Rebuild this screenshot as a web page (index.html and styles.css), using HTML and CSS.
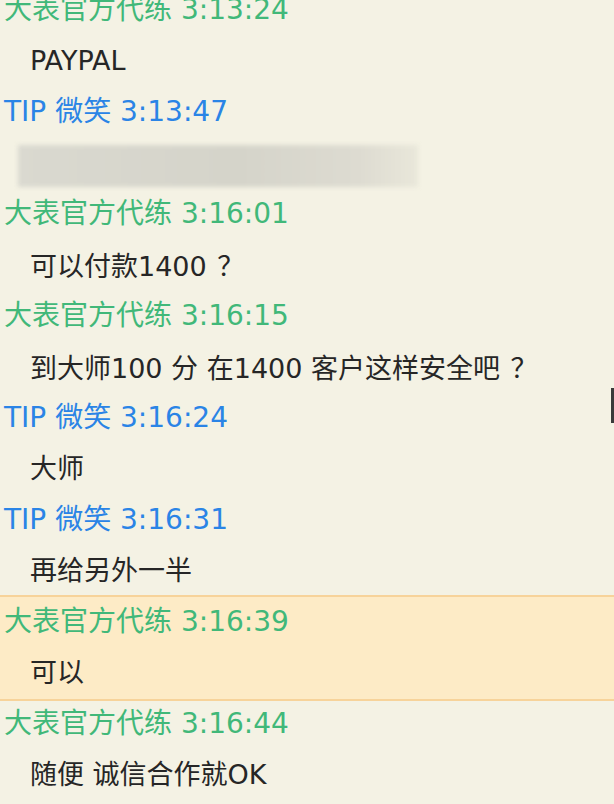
FILE: index.html
```html
<!DOCTYPE html>
<html lang="zh-CN">
<head>
    <meta charset="UTF-8">
    <meta name="viewport" content="width=device-width, initial-scale=1.0">
    <title>聊天记录</title>
    <link rel="stylesheet" href="styles.css">
</head>
<body>
    <div class="chat-log">
        <div class="entry">
            <div class="sender seller">大表官方代练 3:13:24</div>
            <div class="text">PAYPAL</div>
        </div>
        <div class="entry">
            <div class="sender buyer">TIP 微笑 3:13:47</div>
            <div class="text"><div class="blurred"></div></div>
        </div>
        <div class="entry">
            <div class="sender seller">大表官方代练 3:16:01</div>
            <div class="text">可以付款1400 <span class="fw">？</span></div>
        </div>
        <div class="entry">
            <div class="sender seller">大表官方代练 3:16:15</div>
            <div class="text">到大师100 分 在1400 客户这样安全吧 <span class="fw">？</span></div>
        </div>
        <div class="entry">
            <div class="sender buyer">TIP 微笑 3:16:24</div>
            <div class="text">大师</div>
        </div>
        <div class="entry">
            <div class="sender buyer">TIP 微笑 3:16:31</div>
            <div class="text">再给另外一半</div>
        </div>
        <div class="entry selected">
            <div class="sender seller">大表官方代练 3:16:39</div>
            <div class="text">可以</div>
        </div>
        <div class="entry">
            <div class="sender seller">大表官方代练 3:16:44</div>
            <div class="text">随便 诚信合作就OK</div>
        </div>
    </div>
    <div class="caret"></div>
</body>
</html>
```

FILE: styles.css
```css
html, body {
    margin: 0;
    padding: 0;
    background: #f4f2e4;
    overflow: hidden;
}

body {
    font-family: "DejaVu Sans", "Noto Sans CJK SC", sans-serif;
    position: relative;
    height: 804px;
}

.chat-log {
    margin-top: -15px;
}

.entry {
    display: flex;
    flex-direction: column;
}

.sender {
    height: 50px;
    line-height: 50px;
    font-size: 28px;
    padding-left: 4px;
    white-space: nowrap;
}

.seller {
    color: #41b879;
}

.buyer {
    color: #2a84e6;
}

.text {
    height: 52px;
    line-height: 52px;
    font-size: 27px;
    color: #262626;
    padding-left: 30px;
    white-space: nowrap;
}

.fw {
    font-family: "Noto Sans CJK JP", "Noto Sans CJK SC", sans-serif;
    margin-left: 2px;
}

.blurred {
    width: 400px;
    height: 42px;
    margin: 8px 0 0 -12px;
    background: linear-gradient(to right, #dad9d0, #d5d4ca 55%, #dddbd1 85%, #e9e7da);
    filter: blur(2px);
}

.entry.selected {
    background: #fdebc6;
    border-top: 2px solid #f7d39a;
    border-bottom: 2px solid #f7d39a;
    margin: -2px 0;
}

.caret {
    position: absolute;
    left: 611px;
    top: 388px;
    width: 3px;
    height: 35px;
    background: #3a3a3a;
}
```
